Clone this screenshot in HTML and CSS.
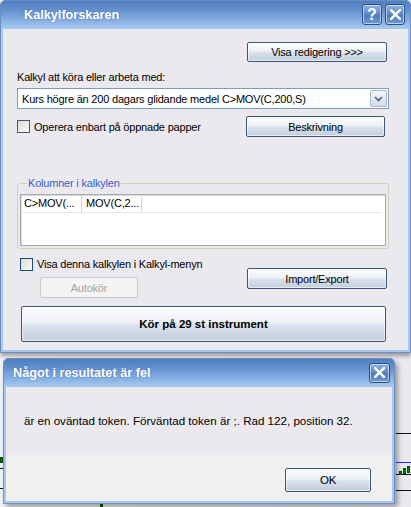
FILE: index.html
```html
<!DOCTYPE html>
<html lang="sv">
<head>
<meta charset="utf-8">
<title>Kalkylforskaren</title>
<link rel="stylesheet" href="styles.css">
</head>
<body>
<div class="desktop">
  <div class="chart">
    <span class="cl black" style="top:433px;left:396px;width:15px"></span>
    <span class="cl blue" style="top:462px;left:396px;width:15px"></span>
    <span class="cl black" style="top:474px;left:396px;width:15px"></span>
    <span class="cl black" style="top:490px;left:396px;width:15px"></span>
    <span class="cl black" style="top:468px;left:0;width:3px"></span>
    <span class="cl black" style="top:488px;left:0;width:3px"></span>
    <span class="candle" style="top:471px;left:399px;height:4px"></span>
    <span class="candle" style="top:468px;left:403px;height:6px"></span>
    <span class="candle" style="top:466px;left:407px;height:7px"></span>
    <span class="candle" style="top:457px;left:0;height:6px"></span>
    <span class="candle" style="top:503px;left:100px;height:4px"></span>
  </div>

  <div class="win main">
    <div class="titlebar">
      <span class="title">Kalkylforskaren</span>
      <div class="tbtns">
        <span class="tbtn">?</span>
        <span class="tbtn"><svg viewBox="0 0 10 10" width="11" height="11"><path d="M1 1L9 9M9 1L1 9" stroke="#fff" stroke-width="2.2" stroke-linecap="square"/></svg></span>
      </div>
    </div>
    <div class="client">
      <div class="row end"><button class="btn visa">Visa redigering &gt;&gt;&gt;</button></div>
      <div class="lbl">Kalkyl att köra eller arbeta med:</div>
      <div class="combo">
        <span class="combo-text">Kurs högre än 200 dagars glidande medel C&gt;MOV(C,200,S)</span>
        <span class="drop"><svg viewBox="0 0 9 6" width="9" height="6"><path d="M1 1L4.5 4.5L8 1" fill="none" stroke="#4d6185" stroke-width="1.6"/></svg></span>
      </div>
      <div class="row between opt">
        <label class="chk"><span class="box"></span>Operera enbart på öppnade papper</label>
        <button class="btn besk">Beskrivning</button>
      </div>
      <fieldset class="group">
        <legend>Kolumner i kalkylen</legend>
        <div class="list">
          <div class="hdr">
            <span class="col c1">C&gt;MOV(...</span>
            <span class="col c2">MOV(C,2...</span>
          </div>
        </div>
      </fieldset>
      <div class="row between lower">
        <div class="leftcol">
          <label class="chk chk2"><span class="box"></span>Visa denna kalkylen i Kalkyl-menyn</label>
          <button class="btn disabled auto">Autokör</button>
        </div>
        <button class="btn imp">Import/Export</button>
      </div>
      <button class="btn big">Kör på 29 st instrument</button>
    </div>
  </div>

  <div class="win msg">
    <div class="titlebar">
      <span class="title">Något i resultatet är fel</span>
      <div class="tbtns">
        <span class="tbtn"><svg viewBox="0 0 10 10" width="11" height="11"><path d="M1 1L9 9M9 1L1 9" stroke="#fff" stroke-width="2.2" stroke-linecap="square"/></svg></span>
      </div>
    </div>
    <div class="client msgclient">
      <div class="msgtext">är en oväntad token. Förväntad token är ;. Rad 122, position 32.</div>
      <div class="msgfoot"><button class="btn ok">OK</button></div>
    </div>
  </div>
</div>
</body>
</html>
```

FILE: styles.css
```css
* { box-sizing: border-box; }
html, body { margin: 0; padding: 0; }
body {
  width: 411px;
  height: 507px;
  overflow: hidden;
  font-family: "Liberation Sans", Arial, sans-serif;
  font-size: 11px;
  letter-spacing: -0.2px;
  color: #000;
  background: linear-gradient(90deg, #f2f2f4 0%, #e9e9ee 100%);
}
.desktop {
  position: relative;
  width: 411px;
  height: 507px;
}
.chart { position: absolute; inset: 0; }
.cl { position: absolute; height: 1px; }
.cl.black { background: #111; }
.cl.blue { background: #2a2aff; }
.candle { position: absolute; width: 3px; background: #0a7a0a; border: 1px solid #064d06; }

.win {
  position: relative;
  border: 3px solid #a6c7ee;
  border-top: 0;
  border-radius: 6px 6px 0 0;
  outline: 1px solid #6d8fbf;
  outline-offset: -1px;
  background: #a6c7ee;
}
.main {
  width: 411px;
  box-shadow: 0 3px 4px rgba(0,0,0,0.35);
}
.msg {
  width: 392px;
  margin-left: 3px;
  margin-top: 5px;
  box-shadow: 3px 3px 5px rgba(0,0,0,0.35);
}
.titlebar {
  height: 28px;
  display: flex;
  align-items: center;
  justify-content: space-between;
  margin: 0 -3px;
  padding: 0 3px 0 24px;
  border-radius: 6px 6px 0 0;
  background: linear-gradient(#4c7bc0 0%, #5f8ccb 30%, #7fa9de 65%, #a3c8ef 100%);
}
.msg .titlebar { padding-left: 10px; height: 28px; }
.title {
  color: #fff;
  font-weight: bold;
  font-size: 12.7px;
  letter-spacing: 0;
  text-shadow: 0 0 2px rgba(40,70,120,0.5);
  margin-top: 2px;
}
.tbtns { display: flex; gap: 3px; margin-right: 3px; margin-top: 1px; }
.tbtn {
  width: 20px;
  height: 21px;
  display: flex;
  align-items: center;
  justify-content: center;
  border: 1px solid #2c4f84;
  border-radius: 3px;
  box-shadow: inset 0 0 0 1px rgba(255,255,255,0.55);
  background: linear-gradient(#8fb3e3, #5a86c6 50%, #4b79bd 51%, #6e9ad6);
  color: #fff;
  font-weight: bold;
  font-size: 16px;
  letter-spacing: 0;
}
.msg .tbtn { width: 21px; height: 20px; margin-right: -1px; }

.client {
  background: #ebe9ed;
  padding: 0 19px 8px 14px;
  border-top: 1px solid #a3c6ee;
}
.row { display: flex; }
.end { justify-content: flex-end; }
.between { justify-content: space-between; }

.btn {
  font-family: inherit;
  font-size: 11px;
  letter-spacing: -0.2px;
  color: #000;
  height: 20px;
  padding: 0;
  border: 1px solid #3c5576;
  border-radius: 2px;
  background: linear-gradient(#fbfcfd 0%, #eef1f5 45%, #d9e0eb 55%, #c2cedd 100%);
  box-shadow: inset 0 0 0 1px rgba(255,255,255,0.6);
}
.visa { width: 140px; margin-top: 13px; margin-right: 2px; }
.lbl { margin-top: 8px; line-height: 14px; }
.combo {
  margin-top: 4px;
  height: 21px;
  border: 1px solid #7f9db9;
  background: #fff;
  display: flex;
  align-items: center;
  justify-content: space-between;
  padding-left: 4px;
}
.combo-text { line-height: 14px; }
.drop {
  width: 17px;
  height: 17px;
  margin-right: 1px;
  border: 1px solid #a9b8d0;
  border-radius: 2px;
  background: linear-gradient(#f4f7fb, #d3dcea);
  display: flex;
  align-items: center;
  justify-content: center;
}
.opt { margin-top: 7px; align-items: center; }
.chk { display: flex; align-items: center; line-height: 14px; }
.box {
  width: 13px;
  height: 13px;
  border: 1px solid #4b5a6e;
  background: linear-gradient(135deg, #dcdcd7, #fbfbfa);
  margin-right: 4px;
}
.besk { width: 139px; margin-right: 4px; height: 21px; }

.group {
  margin: 39px 0 0 0;
  padding: 4px 2px 2px 2px;
  border: 1px solid #d0d0bf;
  border-radius: 3px;
  min-width: 0;
}
.group legend {
  color: #3c5ec5;
  padding: 0 1px;
  margin-left: 7px;
  line-height: 14px;
}
.list {
  height: 52px;
  background: #fff;
  border: 1px solid #a5a9b0;
  box-shadow: inset 1px 1px 0 #dcdcdc;
}
.hdr {
  display: flex;
  height: 18px;
  border-bottom: 1px solid #e4e5e8;
  margin: 0 3px 0 1px;
}
.col {
  line-height: 17px;
  padding-left: 2px;
  border-right: 1px solid #d5d6da;
  white-space: nowrap;
}
.c1 { width: 60px; }
.c2 { width: 60px; padding-left: 4px; }

.lower { margin-top: 8px; }
.leftcol { display: flex; flex-direction: column; align-items: flex-start; }
.chk2 { margin-left: 3px; }
.chk2 .box { border-color: #1e4d7d; }
.auto {
  margin-top: 6px;
  margin-left: 23px;
  width: 98px;
  height: 21px;
  border-color: #c8cacd;
  background: #f4f4f4;
  box-shadow: none;
  color: #a3a3a3;
}
.imp { width: 140px; height: 21px; margin-top: 11px; margin-right: 2px; }
.big {
  display: block;
  margin: 8px 3px 0 4px;
  width: calc(100% - 7px);
  height: 36px;
  font-weight: bold;
  font-size: 11.5px;
  letter-spacing: 0;
}

.msgclient { padding: 0; }
.msgtext {
  background: #ebe9ed;
  height: 68px;
  padding: 27px 0 0 18px;
  line-height: 14px;
  font-size: 11.6px;
  letter-spacing: 0;
}
.msgfoot {
  background: #f0f0f0;
  height: 46px;
  display: flex;
  justify-content: flex-end;
  padding: 13px 21px 0 0;
}
.ok { width: 86px; height: 24px; font-size: 11.5px; }
```
